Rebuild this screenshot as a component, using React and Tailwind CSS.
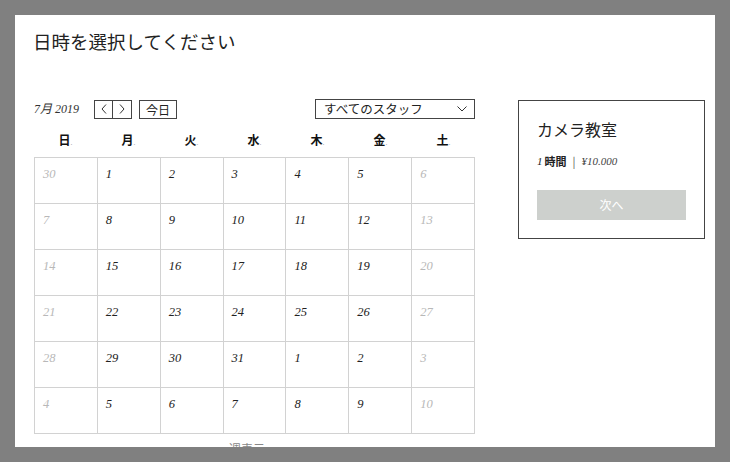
import React from 'react';

const jp = "font-['Noto_Sans_CJK_JP','Noto_Sans',sans-serif]";
const serif = "font-['Liberation_Serif','Noto_Sans_CJK_JP',serif] italic";

const weekdays = ['日', '月', '火', '水', '木', '金', '土'];

// [day, muted]
const weeks = [
  [[30, 1], [1, 0], [2, 0], [3, 0], [4, 0], [5, 0], [6, 1]],
  [[7, 1], [8, 0], [9, 0], [10, 0], [11, 0], [12, 0], [13, 1]],
  [[14, 1], [15, 0], [16, 0], [17, 0], [18, 0], [19, 0], [20, 1]],
  [[21, 1], [22, 0], [23, 0], [24, 0], [25, 0], [26, 0], [27, 1]],
  [[28, 1], [29, 0], [30, 0], [31, 0], [1, 0], [2, 0], [3, 1]],
  [[4, 1], [5, 0], [6, 0], [7, 0], [8, 0], [9, 0], [10, 1]],
];

const Chevron = ({ dir }) => (
  <svg width="6" height="10" viewBox="0 0 6 10" fill="none" stroke="#333" strokeWidth="1">
    {dir === 'left' ? <polyline points="5,0.5 1,5 5,9.5" /> : <polyline points="1,0.5 5,5 1,9.5" />}
  </svg>
);

const App = () => {
  return (
    <div className="w-[730px] h-[462px] bg-[#808080] p-[15px]">
      <div className={`h-[432px] bg-white overflow-hidden ${jp}`}>
        {/* Title */}
        <h1 className="pl-[18px] pt-[13px] text-[18.5px] leading-[26px] text-[#222] font-normal">
          日時を選択してください
        </h1>

        <div className="flex pl-[18px] mt-[45px]">
          {/* Calendar */}
          <div className="w-[442px]">
            <div className="flex items-center h-[20px]">
              <span className={`${serif} text-[12px] text-[#333] w-[61px] pl-[1px]`}>7月 2019</span>
              <div className="flex h-[19px] border border-[#444]">
                <button className="w-[18px] flex items-center justify-center border-r border-[#444]">
                  <Chevron dir="left" />
                </button>
                <button className="w-[18px] flex items-center justify-center">
                  <Chevron dir="right" />
                </button>
              </div>
              <button className="ml-[7px] h-[19px] w-[38px] border border-[#444] text-[12px] leading-[17px] text-[#222]">
                今日
              </button>
              <div className="ml-auto w-[160px] h-[20px] border border-[#444] flex items-center justify-between pl-[8px] pr-[7px]">
                <span className="text-[12.5px] text-[#222]">すべてのスタッフ</span>
                <svg width="10" height="6" viewBox="0 0 10 6" fill="none" stroke="#333" strokeWidth="1">
                  <polyline points="0.5,0.5 5,5 9.5,0.5" />
                </svg>
              </div>
            </div>

            <div className="grid grid-cols-7 w-[441px] ml-[1px] h-[38px] pt-[3px] items-center">
              {weekdays.map((d) => (
                <div key={d} className="text-center text-[12px] font-bold text-[#111]">
                  {d}
                  <span className="text-[7px] font-normal text-[#aaa]">.</span>
                </div>
              ))}
            </div>

            <div className="w-[441px] ml-[1px] grid grid-cols-7 border-l border-t border-[#d2d2d2]">
              {weeks.flat().map(([day, muted], i) => (
                <div
                  key={i}
                  className={`h-[46px] border-r border-b border-[#d2d2d2] pl-[8px] pt-[8px] ${serif} text-[12.5px] leading-[16px] ${muted ? 'text-[#b8b8b8]' : 'text-[#222]'}`}
                >
                  {day}
                </div>
              ))}
            </div>

            <div className="mt-[6px] pl-[196px] text-[12px] text-[#888]">週表示</div>
          </div>

          {/* Service card */}
          <div className="ml-[43px] mt-[1px] w-[187px] h-[139px] border border-[#444] px-[18px] pt-[17px]">
            <div className="text-[16px] leading-[22px] text-[#222]">カメラ教室</div>
            <div className="mt-[13px] flex items-center text-[11px] leading-[16px] text-[#222]">
              <span className={serif}>1</span>
              <span className="ml-[2px] font-bold">時間</span>
              <span className="mx-[6px] text-[#555]">|</span>
              <span className={`${serif} text-[#444]`}>¥10.000</span>
            </div>
            <button className="mt-[21px] w-full h-[30px] bg-[#cdd0cd] text-white text-[12px]">
              次へ
            </button>
          </div>
        </div>
      </div>
    </div>
  );
};

export default App;
